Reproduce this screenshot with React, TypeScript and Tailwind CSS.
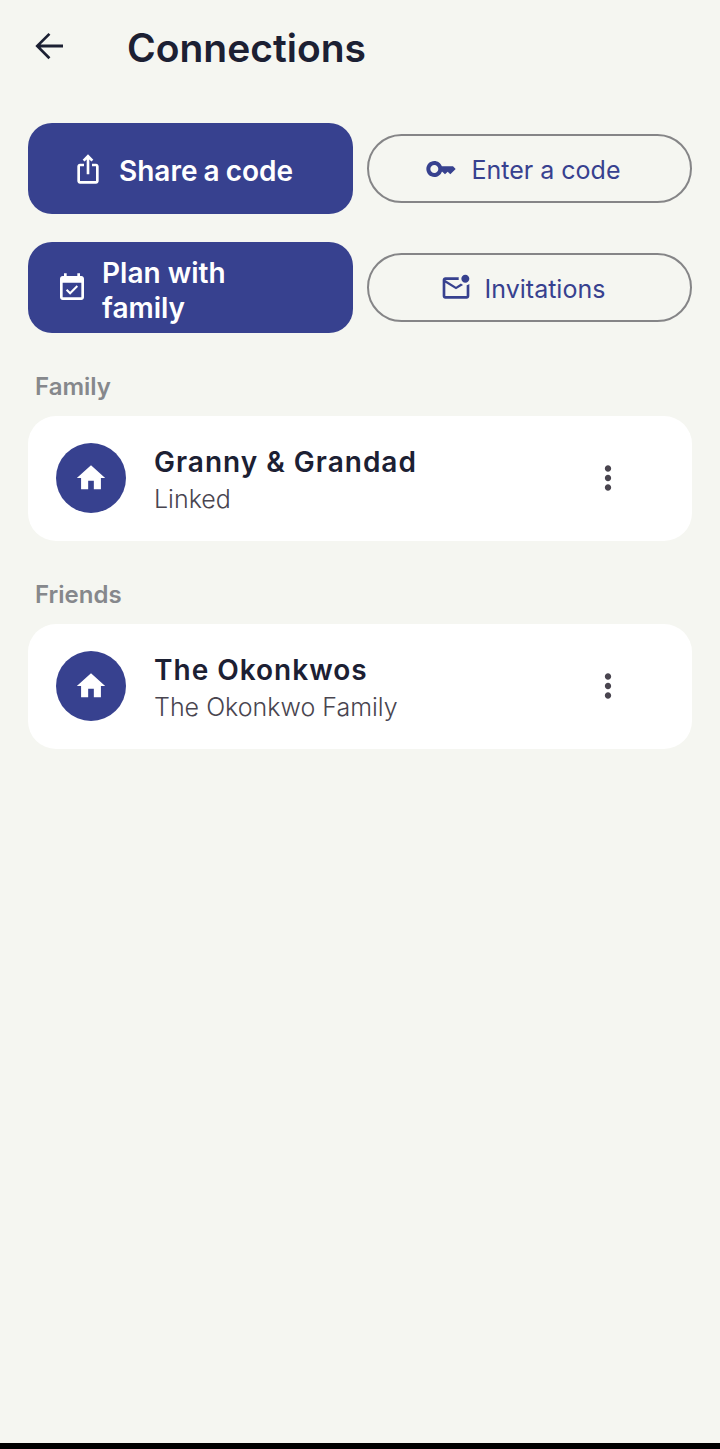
const ArrowBack = () => (
  <svg viewBox="0 0 24 24" className="w-[42px] h-[42px] mb-[4px] fill-[#1c2033]">
    <path d="M20 11.2H7.2l5.6-5.6L11.7 4.5 4.2 12l7.5 7.5 1.1-1.1-5.6-5.6H20v-1.6z" />
  </svg>
);

const ShareIcon = () => (
  <svg viewBox="0 0 24 24" className="w-8 h-8 shrink-0 fill-white">
    <path d="M16 5l-1.42 1.42-1.59-1.59V16h-1.98V4.83L9.42 6.42 8 5l4-4 4 4zm4 5v11c0 1.1-.9 2-2 2H6c-1.11 0-2-.9-2-2V10c0-1.11.89-2 2-2h3v2H6v11h12V10h-3V8h3c1.1 0 2 .89 2 2z" />
  </svg>
);

const CalendarIcon = () => (
  <svg viewBox="0 0 24 24" className="w-8 h-8 shrink-0 fill-white">
    <path d="M16.53 11.06L15.47 10l-4.88 4.88-2.12-2.12-1.06 1.06L10.59 17l5.94-5.94zM19 3h-1V1h-2v2H8V1H6v2H5c-1.11 0-1.99.9-1.99 2L3 19c0 1.1.89 2 2 2h14c1.1 0 2-.9 2-2V5c0-1.1-.9-2-2-2zm0 16H5V8h14v11z" />
  </svg>
);

const KeyIcon = () => (
  <svg viewBox="0 0 24 24" className="w-8 h-8 shrink-0 fill-[#37418f]">
    <path d="M21 10h-8.35C11.83 7.67 9.61 6 7 6c-3.31 0-6 2.69-6 6s2.69 6 6 6c2.61 0 4.83-1.67 5.65-4H13l2 2 2-2 2 2 4-4.04L21 10zM7 15c-1.65 0-3-1.35-3-3s1.35-3 3-3 3 1.35 3 3-1.35 3-3 3z" />
  </svg>
);

const MailIcon = () => (
  <svg viewBox="0 0 24 24" className="w-8 h-8 shrink-0 fill-[#37418f]">
    <path d="M22 8.98V18c0 1.1-.9 2-2 2H4c-1.1 0-2-.9-2-2V6c0-1.1.9-2 2-2h10.1c-.06.32-.1.66-.1 1s.04.68.1 1H4l8 5 3.67-2.29c.47.43 1.02.76 1.63.98L12 13 4 8v10h16V9.9c.74-.15 1.42-.48 2-.92zM16 5c0 1.66 1.34 3 3 3s3-1.34 3-3-1.34-3-3-3-3 1.34-3 3z" />
  </svg>
);

const HomeIcon = () => (
  <svg viewBox="0 0 24 24" className="w-[34px] h-[34px] fill-white">
    <path d="M10 20v-6h4v6h5v-8h3L12 3 2 12h3v8z" />
  </svg>
);

const MoreIcon = () => (
  <svg viewBox="0 0 24 24" className="w-[38px] h-[38px] fill-[#49454f]">
    <path d="M12 8c1.1 0 2-.9 2-2s-.9-2-2-2-2 .9-2 2 .9 2 2 2zm0 2c-1.1 0-2 .9-2 2s.9 2 2 2 2-.9 2-2-.9-2-2-2zm0 6c-1.1 0-2 .9-2 2s.9 2 2 2 2-.9 2-2-.9-2-2-2z" />
  </svg>
);

type ConnectionCardProps = {
  label: string;
  name: string;
  detail: string;
};

const ConnectionCard = ({ label, name, detail }: ConnectionCardProps) => (
  <section>
    <h2 className="pl-[7px] text-[24px] leading-[28px] pt-[1px] font-semibold text-[#86888c]">{label}</h2>
    <div className="mt-[15px] h-[125px] rounded-[28px] bg-white pl-[28px] pr-[65px] pb-[1px] flex items-center">
      <div className="w-[70px] h-[70px] rounded-full bg-[#37418f] flex items-center justify-center">
        <HomeIcon />
      </div>
      <div className="ml-[28px] pt-[1px] flex-1">
        <p className="text-[28px] leading-[40px] font-semibold tracking-[1px] text-[#1c2033]">{name}</p>
        <p className="text-[25px] leading-[34px] font-light text-[#49454f]">{detail}</p>
      </div>
      <MoreIcon />
    </div>
  </section>
);

export default function App() {
  return (
    <div className="h-[1449px] flex flex-col bg-[#f5f6f1] font-['Inter',sans-serif]">
      <div className="flex-1 px-[28px]">
        <header className="h-[96px] flex items-center">
          <ArrowBack />
          <h1 className="ml-[57px] text-[39px] font-semibold text-[#1c2033]">Connections</h1>
        </header>

        <div className="mt-[27px] grid grid-cols-2 gap-x-[14px] gap-y-[28px]">
          <button className="h-[91px] rounded-[24px] bg-[#37418f] pr-[16px] flex items-center justify-center gap-[15px] text-white text-[28px] font-semibold [word-spacing:-1px]">
            <ShareIcon />
            <span className="pt-[4px]">Share a code</span>
          </button>
          <button className="h-[69px] self-center rounded-full border-2 border-[#858587] pr-[14px] flex items-center justify-center gap-[15px] text-[#37418f] text-[25px]">
            <KeyIcon />
            <span className="pt-[4px]">Enter a code</span>
          </button>
          <button className="h-[91px] rounded-[24px] bg-[#37418f] pl-[28px] flex items-center gap-[14px] text-white text-[28px] leading-[35px] font-semibold text-left">
            <CalendarIcon />
            <span className="w-[180px] pt-[6px]">Plan with family</span>
          </button>
          <button className="h-[69px] self-center rounded-full border-2 border-[#858587] pr-[14px] flex items-center justify-center gap-[13px] text-[#37418f] text-[25px]">
            <MailIcon />
            <span className="pt-[4px]">Invitations</span>
          </button>
        </div>

        <div className="mt-[39px] flex flex-col gap-[39px]">
          <ConnectionCard label="Family" name="Granny & Grandad" detail="Linked" />
          <ConnectionCard label="Friends" name="The Okonkwos" detail="The Okonkwo Family" />
        </div>
      </div>
      <div className="h-[6px] bg-black" />
    </div>
  );
}
